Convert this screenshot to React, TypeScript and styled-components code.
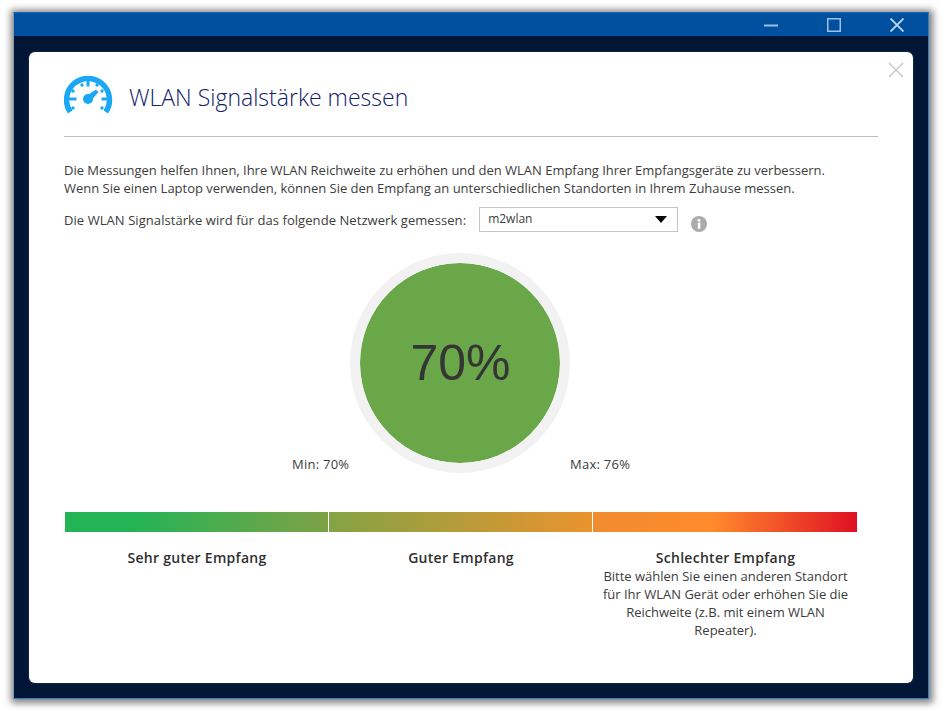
import React from "react";
import styled, { createGlobalStyle } from "styled-components";

const Global = createGlobalStyle`
  html, body { margin: 0; padding: 0; background: #fff; }
  body { font-family: "Open Sans", "Noto Sans", sans-serif; color: #3c3c3c; }
`;

const Page = styled.div`
  width: 942px;
  height: 710px;
  padding: 12px 13px 11px 13px;
  box-sizing: border-box;
  overflow: hidden;
`;

const Window = styled.div`
  height: 100%;
  display: flex;
  flex-direction: column;
  background: #001636;
  border: 1px solid #2f7fc9;
  border-top-color: #1a63ad;
  border-left-color: #8f9aa8;
  box-sizing: border-box;
  box-shadow: 1px 1px 7px 3px rgba(0, 0, 0, 0.5);
`;

const TitleBar = styled.div`
  height: 23px;
  flex: none;
  background: #0050a0;
  display: flex;
  justify-content: flex-end;
  align-items: center;
`;

const WinButton = styled.div`
  width: 62px;
  height: 23px;
  display: flex;
  align-items: center;
  justify-content: center;
  margin-right: ${(p: { $mr?: number }) => p.$mr ?? 0}px;
`;

const Body = styled.div`
  flex: 1;
  padding: 16px 15px 15px 15px;
  display: flex;
  min-height: 0;
`;

const Card = styled.div`
  position: relative;
  flex: 1;
  background: #fff;
  border-radius: 6px;
  padding: 21px 35px 0 35px;
  box-sizing: border-box;
  box-shadow: 0 0 3px rgba(40, 60, 100, 0.9);
`;

const CloseBtn = styled.div`
  position: absolute;
  top: 9px;
  right: 9px;
  width: 16px;
  height: 16px;
`;

const Header = styled.div`
  display: flex;
  align-items: center;
  gap: 16px;
  height: 63px;
  border-bottom: 1px solid #bdbdbd;
`;

const HeaderIcon = styled.svg`
  width: 49px;
  height: 38px;
  margin-bottom: 20px;
  flex: none;
`;

const Title = styled.h1`
  margin: 0 0 16px 0;
  font-size: 23px;
  font-weight: 300;
  color: #10206a;
  line-height: 30px;
`;

const Intro = styled.p`
  margin: 24px 0 0 0;
  font-size: 13px;
  letter-spacing: -0.02px;
  line-height: 18px;
  color: #3c3c3c;
  white-space: nowrap;
`;

const NetworkRow = styled.div`
  display: flex;
  align-items: center;
  margin-top: 10px;
  font-size: 13px;
  letter-spacing: 0.065px;
  height: 25px;
`;

const Select = styled.div`
  width: 199px;
  height: 25px;
  margin-left: 13px;
  border: 1px solid #c4c4c4;
  box-sizing: border-box;
  display: flex;
  align-items: center;
  justify-content: space-between;
  padding: 0 10px 2px 8px;
  font-size: 12px;
  letter-spacing: 0;
`;

const Caret = styled.div`
  width: 0;
  height: 0;
  border-left: 6.5px solid transparent;
  border-right: 6.5px solid transparent;
  border-top: 7px solid #000;
  margin-top: 2px;
`;

const InfoIcon = styled.svg`
  width: 16px;
  height: 16px;
  margin-left: 13px;
  margin-top: 9px;
`;

const GaugeArea = styled.div`
  position: relative;
  margin-top: 21px;
  padding-right: 23px;
  display: flex;
  justify-content: center;
  height: 220px;
`;

const GaugeRing = styled.div`
  width: 220px;
  height: 220px;
  box-sizing: border-box;
  border-radius: 50%;
  border: 10px solid #f2f2f2;
  background: #69a749;
  background-clip: padding-box;
  padding-left: 2px;
  display: flex;
  align-items: center;
  justify-content: center;
  font-family: "Liberation Sans", Arial, sans-serif;
  font-size: 50px;
  color: #353535;
`;

const GaugeLabel = styled.span`
  position: absolute;
  top: 202px;
  font-size: 13px;
  letter-spacing: 0.25px;
  line-height: 18px;
  ${(p: { $side: "min" | "max" }) => (p.$side === "min" ? "left: 228px;" : "left: 506px;")}
`;

const Bar = styled.div`
  margin-top: 39px;
  width: 792px;
  margin-left: 1px;
  height: 20px;
  display: grid;
  grid-template-columns: 263px 263px 264px;
  column-gap: 1px;
`;

const BarSegment = styled.div<{ $stops: string }>`
  background: linear-gradient(90deg, ${(p) => p.$stops});
`;

const Legend = styled.div`
  display: grid;
  grid-template-columns: 264px 264px 265px;
  width: 793px;
  margin-left: 1px;
  margin-top: 17px;
`;

const LegendCell = styled.div`
  text-align: center;
  font-size: 13px;
  line-height: 18px;
  padding: 0 8px;
`;

const LegendTitle = styled.div`
  font-weight: 600;
  font-size: 14px;
  letter-spacing: 0.28px;
  color: #2f2f2f;
`;

export default function App() {
  return (
    <Page>
      <Global />
      <Window>
        <TitleBar>
          <WinButton $mr={1}>
            <svg width="14" height="14" viewBox="0 0 14 14">
              <path d="M0 7.5H14" stroke="#9fc0e4" strokeWidth="2" />
            </svg>
          </WinButton>
          <WinButton $mr={1}>
            <svg width="14" height="14" viewBox="0 0 14 14">
              <rect x="0.75" y="0.75" width="12.5" height="12.5" fill="none" stroke="#9fc0e4" strokeWidth="1.5" />
            </svg>
          </WinButton>
          <WinButton>
            <svg width="14" height="14" viewBox="0 0 14 14">
              <path d="M0.5 0.5L13.5 13.5M13.5 0.5L0.5 13.5" stroke="#c2d6ee" strokeWidth="1.8" />
            </svg>
          </WinButton>
        </TitleBar>
        <Body>
          <Card>
            <CloseBtn>
              <svg width="16" height="16" viewBox="0 0 16 16">
                <path d="M1 1L15 15M15 1L1 15" stroke="#c6c6c6" strokeWidth="1.4" />
              </svg>
            </CloseBtn>
            <Header>
              <HeaderIcon viewBox="0 0 49 38">
                <path d="M6.2 36 A21.5 21.5 0 1 1 41.8 36" fill="none" stroke="#1aa7f5" strokeWidth="5.4" />
                <path d="M24 4V10.5M4 23H12.5M37.5 23H45" stroke="#1aa7f5" strokeWidth="3" />
                <circle cx="24" cy="23" r="5" fill="#1aa7f5" />
                <path d="M21.5 20.5L32 13.6L34.4 16L26.5 25.5Z" fill="#1aa7f5" />
                <g fill="#1aa7f5">
                  <circle cx="9" cy="32" r="1.7" />
                  <circle cx="38" cy="32" r="1.7" />
                  <circle cx="9" cy="15" r="1.7" />
                  <circle cx="18" cy="9" r="1.7" />
                  <circle cx="33" cy="9" r="1.7" />
                  <circle cx="38" cy="15" r="1.7" />
                </g>
              </HeaderIcon>
              <Title>WLAN Signalstärke messen</Title>
            </Header>
            <Intro>
              Die Messungen helfen Ihnen, Ihre WLAN Reichweite zu erhöhen und den WLAN Empfang Ihrer Empfangsgeräte zu verbessern.
              <br />
              Wenn Sie einen Laptop verwenden, können Sie den Empfang an unterschiedlichen Standorten in Ihrem Zuhause messen.
            </Intro>
            <NetworkRow>
              Die WLAN Signalstärke wird für das folgende Netzwerk gemessen:
              <Select>
                m2wlan
                <Caret />
              </Select>
              <InfoIcon viewBox="0 0 16 16">
                <circle cx="8" cy="8" r="8" fill="#ababab" />
                <rect x="6.8" y="6.6" width="2.6" height="6.2" fill="#fff" />
                <circle cx="8" cy="4.2" r="1.5" fill="#fff" />
              </InfoIcon>
            </NetworkRow>
            <GaugeArea>
              <GaugeRing>70%</GaugeRing>
              <GaugeLabel $side="min">Min: 70%</GaugeLabel>
              <GaugeLabel $side="max">Max: 76%</GaugeLabel>
            </GaugeArea>
            <Bar>
              <BarSegment $stops="#22b455 25%, #7da245 100%" />
              <BarSegment $stops="#83a344 0%, #ea932e 100%" />
              <BarSegment $stops="#f08c30 0%, #ff8b2c 45%, #e01024 100%" />
            </Bar>
            <Legend>
              <LegendCell>
                <LegendTitle>Sehr guter Empfang</LegendTitle>
              </LegendCell>
              <LegendCell>
                <LegendTitle>Guter Empfang</LegendTitle>
              </LegendCell>
              <LegendCell>
                <LegendTitle>Schlechter Empfang</LegendTitle>
                Bitte wählen Sie einen anderen Standort für Ihr WLAN Gerät oder erhöhen Sie die Reichweite (z.B. mit einem WLAN Repeater).
              </LegendCell>
            </Legend>
          </Card>
        </Body>
      </Window>
    </Page>
  );
}
